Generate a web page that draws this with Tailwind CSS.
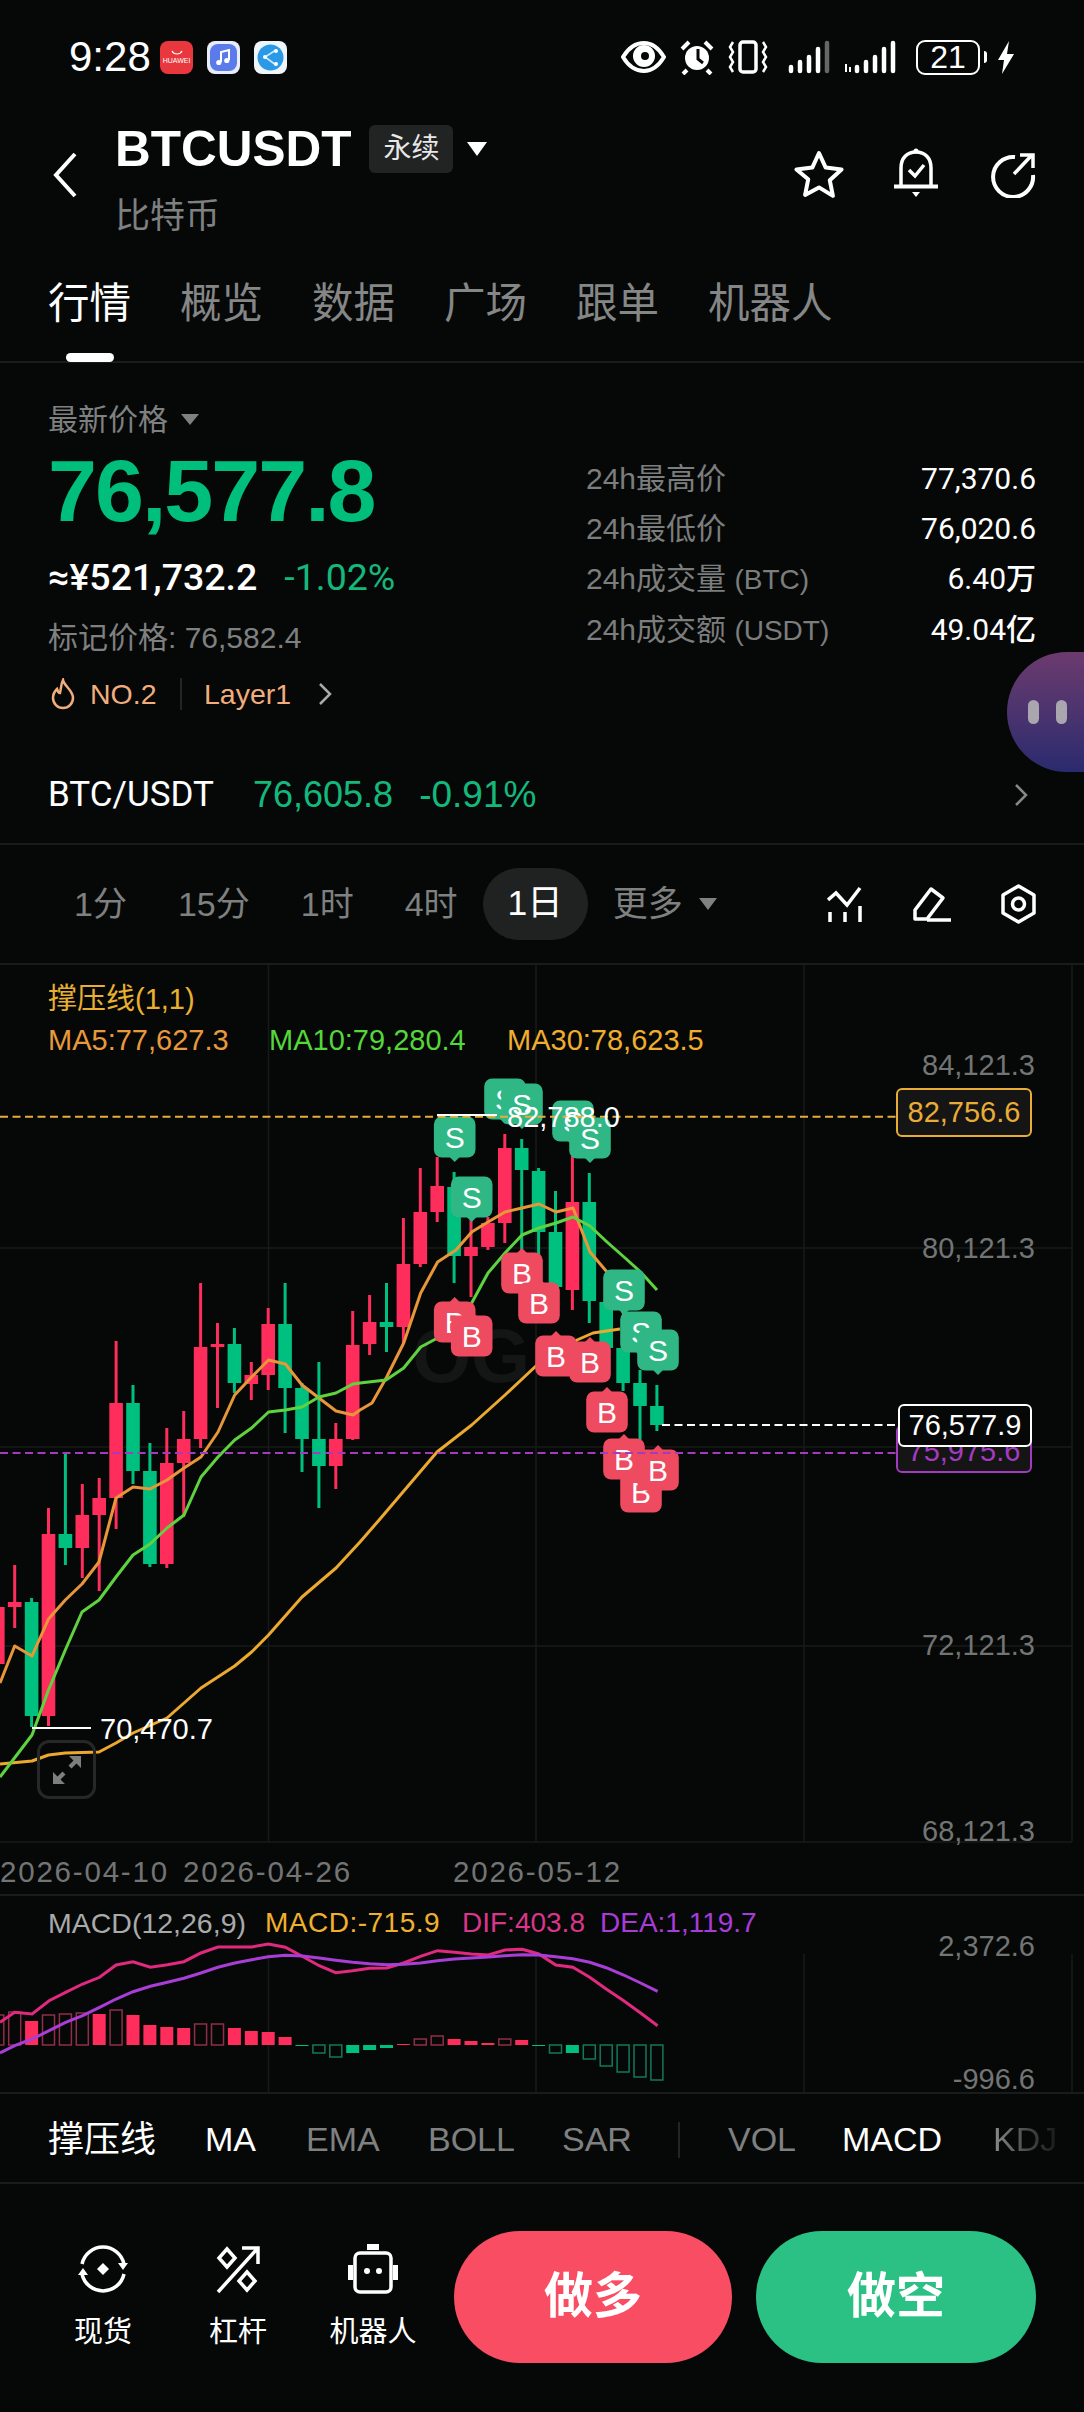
<!DOCTYPE html>
<html lang="zh">
<head>
  <meta charset="UTF-8" />
  <meta name="viewport" content="width=device-width, initial-scale=1.0" />
  <title>BTCUSDT</title>
  <script src="https://cdn.jsdelivr.net/npm/@tailwindcss/browser@4"></script>
</head>
<body class="bg-[#060808]">
<div class="w-[1084px] h-[2412px] overflow-hidden flex flex-col bg-[#060808] text-white font-['Liberation_Sans','Noto_Sans_CJK_SC',sans-serif]">

  <!-- status bar -->
  <div class="h-[114px] flex items-center pl-[69px] relative">
    <span class="text-[42px] w-[91px] leading-none">9:28</span>
    <div class="w-[33px] h-[33px] rounded-lg bg-[#e8383e] flex flex-col items-center justify-center">
      <svg width="14" height="6" viewBox="0 0 14 6"><path d="M2 1c2 4 8 4 10 0" fill="none" stroke="#fff" stroke-width="1.2"/></svg>
      <span class="text-[7px] leading-[9px] text-white">HUAWEI</span>
    </div>
    <div class="w-[33px] h-[33px] rounded-lg bg-[#e9edfb] flex items-center justify-center ml-[14px]">
      <svg width="27" height="27" viewBox="0 0 27 27"><rect width="27" height="27" rx="8" fill="#5b7bea"/><path d="M11 18V8l8-2v10" fill="none" stroke="#fff" stroke-width="2"/><circle cx="8.8" cy="18.5" r="2.6" fill="#fff"/><circle cx="16.8" cy="16.5" r="2.6" fill="#fff"/></svg>
    </div>
    <div class="w-[33px] h-[33px] rounded-lg bg-[#eef5fb] flex items-center justify-center ml-[14px]">
      <svg width="27" height="27" viewBox="0 0 27 27"><circle cx="13.5" cy="13.5" r="13" fill="#2b9ae6"/><path d="M19 6L8 13l11 8" fill="none" stroke="#cfeaff" stroke-width="1.6"/><circle cx="8" cy="13" r="2" fill="#fff"/><circle cx="19" cy="7" r="2" fill="#fff"/><circle cx="19" cy="20" r="2" fill="#fff"/></svg>
    </div>
    <div class="ml-auto flex items-center mr-[70px]">
      <svg width="45" height="32" viewBox="0 0 45 32"><path d="M2 16C8 6 15 2 23 2s14 4 20 14c-6 10-12 14-20 14S8 26 2 16z" fill="none" stroke="#fff" stroke-width="4"/><circle cx="23" cy="15" r="11" fill="#fff"/><circle cx="24" cy="15" r="4" fill="#060808"/></svg>
      <svg width="36" height="36" viewBox="0 0 36 36" class="ml-[13px]"><circle cx="18" cy="19" r="12" fill="#fff"/><path d="M19 10v10l5 4" fill="none" stroke="#060808" stroke-width="3"/><path d="M3 10l7-7M33 10l-7-7M8 31l-4 4M28 31l4 4" stroke="#fff" stroke-width="4"/></svg>
      <svg width="42" height="34" viewBox="0 0 42 34" class="ml-[12px]"><rect x="13" y="2" width="16" height="30" rx="3" fill="none" stroke="#fff" stroke-width="3.5"/><path d="M6 2l-3 5 3 5-3 5 3 5-3 5 3 5M36 2l3 5-3 5 3 5-3 5 3 5-3 5" fill="none" stroke="#fff" stroke-width="2.5"/></svg>
      <svg width="42" height="34" viewBox="0 0 42 34" class="ml-[19px]"><g stroke-width="4.5" stroke-linecap="round" stroke="#fff"><path d="M3 31v-4M12 31v-9M21 31v-14M30 31V9"/><path d="M39 31V3" stroke="#666"/></g></svg>
      <svg width="60" height="34" viewBox="0 0 60 34" class="ml-[14px]"><g stroke-width="4.5" stroke-linecap="round" stroke="#fff"><path d="M13 31v-4M22 31v-9M31 31v-14M40 31V9M49 31V3"/></g><path d="M2 32v-8M6 32v-5" stroke="#fff" stroke-width="2"/></svg>
      <div class="ml-[12px] w-[64px] h-[35px] rounded-[9px] border-[2.5px] border-white flex items-center justify-center text-[32px] leading-none">21</div>
      <div class="w-[3px] h-[12px] bg-white rounded-r ml-[4px]"></div>
      <svg width="16" height="33" viewBox="0 0 16 33" class="ml-[11px]"><path d="M11 0L0 19h6l-2 14 12-20H9z" fill="#fff"/></svg>
    </div>
  </div>

  <!-- header -->
  <div class="h-[136px] flex pt-[5px] relative">
    <svg width="26" height="46" viewBox="0 0 26 46" class="ml-[52px] mt-[33px]"><path d="M23 2L4 23l19 21" fill="none" stroke="#fff" stroke-width="4"/></svg>
    <div class="ml-[37px] flex flex-col">
      <div class="flex items-center h-[60px]">
        <span class="text-[49.5px] font-bold leading-none">BTCUSDT</span>
        <span class="ml-[18px] w-[84px] h-[48px] rounded-md bg-[#222323] flex items-center justify-center text-[28px] text-[#e8e8e8]">永续</span>
        <svg width="20" height="14" viewBox="0 0 20 14" class="ml-[14px]"><path d="M0 0h20L10 14z" fill="#fff"/></svg>
      </div>
      <div class="text-[35px] text-[#7f8080] leading-[44px] mt-[15px]">比特币</div>
    </div>
    <div class="ml-auto mr-[48px] flex items-start mt-[31px]">
      <svg width="50" height="48" viewBox="0 0 50 48"><path d="M25 3l6.7 14.6 15.8 1.9-11.7 10.8 3.1 15.6L25 37.4l-13.9 7.5 3.1-15.6L2.5 19.5l15.8-1.9z" fill="none" stroke="#fff" stroke-width="4" stroke-linejoin="round"/></svg>
      <svg width="48" height="50" viewBox="0 0 48 50" class="ml-[48px] -mt-[2px]"><path d="M9 38V20C9 10 15 4 24 4s15 6 15 16v18" fill="none" stroke="#fff" stroke-width="3.5"/><path d="M2 38.500h44" stroke="#fff" stroke-width="4"/><path d="M17 22l6 6 9-11" fill="none" stroke="#fff" stroke-width="3.500"/><path d="M20 44h8l-4 5z" fill="#fff"/><circle cx="24" cy="3" r="2.500" fill="#fff"/></svg>
      <svg width="46" height="46" viewBox="0 0 46 46" class="ml-[50px] mt-[2px]"><path d="M25 5A20 20 0 1 0 43 23" fill="none" stroke="#fff" stroke-width="4"/><path d="M24 22L42 3M30 3h13v13" fill="none" stroke="#fff" stroke-width="3.500"/></svg>
    </div>
  </div>

  <!-- tabs -->
  <div class="h-[113px] flex gap-[49px] pl-[48px] pt-[33px] text-[41.5px] leading-[41px] text-[#858686] border-b-2 border-[#1a1c1c]">
    <div class="relative text-white">行情<div class="absolute left-[18px] top-[70px] w-[48px] h-[9px] rounded-full bg-white"></div></div>
    <div>概览</div>
    <div>数据</div>
    <div>广场</div>
    <div>跟单</div>
    <div>机器人</div>
  </div>

  <!-- price -->
  <div class="h-[480px] relative flex flex-col">
    <div class="h-[351px] flex">
      <div class="pl-[48px] w-[586px] flex flex-col">
        <div class="mt-[36px] h-[40px] flex items-center text-[30px] text-[#7f8080]">最新价格
          <svg width="18" height="11" viewBox="0 0 18 11" class="ml-[13px]"><path d="M0 0h18L9 11z" fill="#7f8080"/></svg>
        </div>
        <div class="mt-[7px] text-[88px] leading-[90px] font-bold text-[#00bf7c] tracking-[-2px]">76,577.8</div>
        <div class="mt-[19px] h-[44px] flex items-center text-[37.5px] font-medium font-['Roboto','Noto_Sans_CJK_SC',sans-serif]">
          <span>≈¥521,732.2</span><span class="ml-[27px] text-[#14b87c] font-normal">-1.02%</span>
        </div>
        <div class="mt-[18px] h-[40px] flex items-center text-[30px] text-[#7f8080]">标记价格: 76,582.4</div>
        <div class="mt-[17px] h-[40px] flex items-center text-[28.5px] text-[#f2ad7c]">
          <svg width="24" height="32" viewBox="0 0 24 32" class="ml-[3px]"><path d="M12 2c1 6 10 10 10 18a10 10 0 0 1-20 0c0-4 2-7 4-9 1 3 2 4 3 4 1-4 1-9 3-13z" fill="none" stroke="#f2ad7c" stroke-width="2.500"/></svg>
          <span class="ml-[15px] w-[66px]">NO.2</span>
          <div class="w-[2px] h-[32px] bg-[#232525] ml-[24px]"></div>
          <span class="ml-[22px]">Layer1</span>
          <svg width="14" height="24" viewBox="0 0 14 24" class="ml-[27px]"><path d="M2 2l10 10L2 22" fill="none" stroke="#aaa" stroke-width="2.500"/></svg>
        </div>
      </div>
      <div class="w-[450px] pt-[91px] text-[30px] leading-[50px]">
        <div class="flex justify-between"><span class="text-[#7c7d7d]">24h最高价</span><span class="font-[450] font-['Roboto','Noto_Sans_CJK_SC',sans-serif]">77,370.6</span></div>
        <div class="flex justify-between"><span class="text-[#7c7d7d]">24h最低价</span><span class="font-[450] font-['Roboto','Noto_Sans_CJK_SC',sans-serif]">76,020.6</span></div>
        <div class="flex justify-between"><span class="text-[#7c7d7d]">24h成交量 <span class="text-[28px]">(BTC)</span></span><span class="font-[450] font-['Roboto','Noto_Sans_CJK_SC',sans-serif]">6.40万</span></div>
        <div class="flex justify-between"><span class="text-[#7c7d7d]">24h成交额 <span class="text-[28px]">(USDT)</span></span><span class="font-[450] font-['Roboto','Noto_Sans_CJK_SC',sans-serif]">49.04亿</span></div>
      </div>
    </div>
    <div class="mt-[51px] h-[60px] flex items-center pl-[48px] pr-[56px]">
      <span class="text-[35px] font-[450] font-['Roboto',sans-serif] w-[169px]">BTC/USDT</span>
      <span class="ml-[36px] text-[36px] text-[#14b87c]">76,605.8</span>
      <span class="ml-[26px] text-[37px] text-[#14b87c]">-0.91%</span>
      <svg width="14" height="24" viewBox="0 0 14 24" class="ml-auto"><path d="M2 2l10 10L2 22" fill="none" stroke="#888" stroke-width="2.500"/></svg>
    </div>
    <!-- floating assistant -->
    <div class="absolute left-[1007px] top-[289px] w-[77px] h-[120px] rounded-l-[60px] bg-gradient-to-b from-[#6c3a6e] to-[#2a2a6e] flex items-center gap-[17px] pl-[21px]">
      <div class="w-[11px] h-[24px] rounded-full bg-[#a9a6b0]"></div>
      <div class="w-[11px] h-[24px] rounded-full bg-[#a9a6b0]"></div>
    </div>
  </div>

  <!-- timeframes -->
  <div class="h-[122px] flex items-center pl-[74px] pr-[48px] border-y-2 border-[#1a1c1c] text-[34px] text-[#7f8080]">
    <div class="flex items-center gap-[51px]">
      <span>1分</span>
      <span>15分</span>
      <span>1时</span>
      <span>4时</span>
      <span class="-mx-[26px] h-[72px] px-[25px] rounded-full bg-[#202222] text-white text-[35.5px] flex items-center">1日</span>
      <span class="flex items-center text-[35px]">更多
        <svg width="18" height="12" viewBox="0 0 18 12" class="ml-[16px]"><path d="M0 0h18L9 12z" fill="#7f8080"/></svg>
      </span>
    </div>
    <div class="ml-auto flex items-center gap-[50px]">
      <svg width="36" height="38" viewBox="0 0 36 38"><path d="M1 15l8-7 11 12L33 3" fill="none" stroke="#fff" stroke-width="3.500"/><path d="M3 27v10M18 27v10M33 21v16" stroke="#fff" stroke-width="3.500"/></svg>
      <svg width="38" height="36" viewBox="0 0 38 36"><path d="M2 33v-9L18 3l12 9-16 21z" fill="none" stroke="#fff" stroke-width="3.500" stroke-linejoin="round"/><path d="M14 34h24" stroke="#fff" stroke-width="3.500"/></svg>
      <svg width="35" height="40" viewBox="0 0 35 40"><path d="M17.500 2L33 11v18l-15.500 9L2 29V11z" fill="none" stroke="#fff" stroke-width="3.500" stroke-linejoin="round"/><circle cx="17.500" cy="20" r="6" fill="none" stroke="#fff" stroke-width="3.500"/></svg>
    </div>
  </div>

  <!-- main chart -->
  <div class="h-[929px] relative shrink-0">
    <svg id="chart" class="absolute left-0 top-0" width="1084" height="929" viewBox="0 965 1084 929"></svg>

    <div class="absolute left-[48px] top-[17px] text-[29px] leading-[34px] text-[#e9b030]">撑压线(1,1)</div>
    <div class="absolute left-[48px] top-[58px] right-0 flex text-[29px] leading-[34px]">
      <span class="w-[221px] text-[#e8993c]">MA5:77,627.3</span>
      <span class="w-[238px] text-[#55d63a]">MA10:79,280.4</span>
      <span class="text-[#f0ad2e]">MA30:78,623.5</span>
    </div>

    <div class="absolute right-[49px] top-[83px] text-[29px] leading-[34px] text-[#737575]">84,121.3</div>
    <div class="absolute right-[49px] top-[266px] text-[29px] leading-[34px] text-[#737575]">80,121.3</div>
    <div class="absolute right-[49px] top-[663px] text-[29px] leading-[34px] text-[#737575]">72,121.3</div>
    <div class="absolute right-[49px] top-[849px] text-[29px] leading-[34px] text-[#737575]">68,121.3</div>

    <div class="absolute left-[896px] top-[123px] w-[136px] h-[49px] rounded-md border-2 border-[#e9ad36] bg-[#151515] flex items-center justify-center text-[29px] text-[#e9ad36]">82,756.6</div>
    <div class="absolute left-[896px] top-[460px] w-[136px] h-[48px] rounded-md border-2 border-[#a23bc0] bg-[#151515] flex items-end justify-center text-[29px] leading-[40px] text-[#a23bc0]">75,975.6</div>
    <div class="absolute left-[898px] top-[439px] w-[134px] h-[43px] rounded-md border-2 border-white bg-[#060808] flex items-center justify-center text-[29px] text-white">76,577.9</div>

    <div class="absolute left-[100px] top-[747px] text-[29px] leading-[34px] text-white">70,470.7</div>
    <div class="absolute left-[37px] top-[775px] w-[59px] h-[59px] rounded-[12px] border-[3px] border-[#262828] flex items-center justify-center">
      <svg width="30" height="30" viewBox="0 0 30 30"><path d="M29 1v12l-4.500-4.500-5 5-3-3 5-5L17 1zM1 29V17l4.500 4.500 5-5 3 3-5 5L13 29z" fill="#7d7f7f"/></svg>
    </div>

    <div class="absolute left-0 top-[890px] w-full text-[29.5px] leading-[34px] text-[#737575] tracking-[1.8px]">
      <span class="absolute left-0">2026-04-10</span>
      <span class="absolute left-[183px]">2026-04-26</span>
      <span class="absolute left-[453px]">2026-05-12</span>
    </div>
  </div>

  <!-- macd -->
  <div class="h-[198px] relative shrink-0 border-t-2 border-[#1a1c1c]">
    <svg id="macd" class="absolute left-0 top-[-2px]" width="1084" height="198" viewBox="0 1895 1084 198"></svg>
    <div class="absolute left-[48px] top-[10px] flex text-[28px] leading-[34px]">
      <span class="w-[217px] text-[#a9abab] text-[28.5px]">MACD(12,26,9)</span>
      <span class="w-[197px] text-[#f0b02e] tracking-[0.5px]">MACD:-715.9</span>
      <span class="w-[138px] text-[#d9368a]">DIF:403.8</span>
      <span class="text-[#a83cd8]">DEA:1,119.7</span>
    </div>
    <div class="absolute right-[49px] top-[33px] text-[29px] leading-[34px] text-[#737575]">2,372.6</div>
    <div class="absolute right-[49px] top-[166px] text-[29px] leading-[34px] text-[#737575]">-996.6</div>
  </div>

  <!-- indicators -->
  <div class="h-[92px] relative shrink-0 flex items-center pl-[48px] pt-[3px] border-y-2 border-[#1a1c1c] text-[34px] text-[#7f8080]">
    <span class="text-[36px] text-white w-[157px]">撑压线</span>
    <span class="text-white w-[101px]">MA</span>
    <span class="w-[122px]">EMA</span>
    <span class="w-[134px]">BOLL</span>
    <span class="w-[116px]">SAR</span>
    <div class="w-[2px] h-[36px] bg-[#232525]"></div>
    <span class="ml-[48px] w-[114px]">VOL</span>
    <span class="text-white w-[151px]">MACD</span>
    <span class="text-transparent bg-gradient-to-r from-[#8a8a8a] to-[#181a1a] bg-clip-text">KDJ</span>
  </div>

  <!-- bottom actions -->
  <div class="flex-1 relative flex items-start pt-[47px]">
    <div class="w-[454px] flex text-[29px] leading-[34px]">
      <div class="absolute left-[51px] top-[60px] w-[104px] flex flex-col items-center gap-[21px]">
        <svg width="50" height="50" viewBox="0 0 50 50"><path d="M4 20A21.500 21.500 0 0 1 46 20M46 30A21.500 21.500 0 0 1 4 30" fill="none" stroke="#fff" stroke-width="3.500"/><path d="M40 19h10l-5 7zM0 31h10l-5-7z" fill="#fff"/><path d="M25 19l6 6-6 6-6-6z" fill="#fff"/></svg>
        <span>现货</span>
      </div>
      <div class="absolute left-[186px] top-[60px] w-[104px] flex flex-col items-center gap-[21px]">
        <svg width="48" height="50" viewBox="0 0 48 50"><path d="M4 48L44 4M28 4h16v16" fill="none" stroke="#fff" stroke-width="3.500"/><path d="M13 5l8 9-8 9-8-9zM33 28l8 9-8 9-8-9z" fill="none" stroke="#fff" stroke-width="3.500"/></svg>
        <span>杠杆</span>
      </div>
      <div class="absolute left-[321px] top-[60px] w-[104px] flex flex-col items-center gap-[21px]">
        <svg width="50" height="50" viewBox="0 0 50 50"><rect x="19" y="0" width="12" height="6" fill="#fff"/><rect x="7" y="9" width="36" height="39" rx="5" fill="none" stroke="#fff" stroke-width="3.500"/><rect x="0" y="21" width="5" height="15" fill="#fff"/><rect x="45" y="21" width="5" height="15" fill="#fff"/><circle cx="19" cy="27" r="3" fill="#fff"/><circle cx="31" cy="27" r="3" fill="#fff"/></svg>
        <span>机器人</span>
      </div>
    </div>
    <button class="w-[278px] h-[132px] rounded-full bg-[#f94d63] text-[49px] font-bold text-white">做多</button>
    <button class="ml-[24px] w-[280px] h-[132px] rounded-full bg-[#2bc185] text-[49px] font-bold text-white">做空</button>
  </div>
</div>

<script>
  const RED = "#fe2d5c", GREEN = "#00c07f";
  const xOf = i => 14.7 + 16.9 * i;

  // i, up, high, bodyTop, bodyBottom, low
  const candles = [
    [-1,1,1590,1607,1664,1680],[0,1,1565,1602,1607,1628],[1,0,1598,1602,1716,1727],[2,1,1508,1534,1716,1726],
    [3,0,1454,1534,1548,1565],[4,1,1484,1515,1548,1578],[5,1,1478,1498,1515,1591],[6,1,1341,1403,1498,1529],
    [7,0,1385,1403,1471,1484],[8,0,1443,1471,1564,1567],[9,1,1428,1463,1564,1568],[10,1,1411,1439,1463,1517],
    [11,1,1283,1347,1439,1448],[12,1,1323,1344,1347,1408],[13,0,1328,1344,1383,1393],[14,1,1362,1375,1384,1400],
    [15,1,1308,1324,1375,1390],[16,0,1283,1324,1388,1433],[17,0,1383,1388,1439,1472],[18,0,1362,1439,1466,1508],
    [19,1,1423,1439,1466,1489],[20,1,1311,1345,1439,1440],[21,1,1295,1322,1344,1355],[22,0,1283,1322,1327,1352],
    [23,1,1218,1264,1327,1343],[24,1,1168,1212,1264,1267],[25,1,1157,1186,1212,1222],[26,0,1172,1187,1256,1283],
    [27,1,1215,1247,1256,1297],[28,1,1217,1223,1247,1250],[29,1,1134,1148,1223,1243],[30,0,1139,1148,1170,1250],
    [31,0,1168,1171,1232,1286],[32,0,1191,1232,1287,1290],[33,1,1156,1202,1290,1310],[34,0,1173,1202,1301,1323],
    [35,0,1290,1302,1348,1350],[36,0,1340,1348,1383,1391],[37,0,1370,1383,1406,1440],[38,0,1385,1406,1425,1431]
  ];

  const ma5 = "0,1683 14.7,1646 32,1656 48.5,1619 65.3,1600 82,1584 99,1562 116,1498 133,1487 150,1489 167,1480 184,1468 201,1457 218,1432 234.7,1395 251.6,1377 268.5,1360 285.4,1364 302,1385 319,1398 336,1411 353,1415 360,1410 372,1403 386.7,1377 403.7,1343 420.7,1293 437.6,1262 456,1250 471.7,1232 488,1222 505,1212 522,1208 539,1204 556,1212 573,1208 590,1252 607,1272 624,1315";
  const ma10 = "0,1777 32,1735 48.5,1690 65.3,1650 82,1612 99,1600 116,1577 133,1555 150,1544 167,1528 184,1515 201,1477 218,1457 234.7,1440 251.6,1428 268.5,1412 285.4,1410 302,1407 319,1397 336,1393 353,1384 360,1383 386,1380 403.7,1368 420.7,1347 437.6,1338 471.7,1303 488,1273 505,1253 522,1235 539,1228 556,1223 573,1217 590,1226 607,1242 624,1257 640.7,1272 657,1290";
  const ma30 = "0,1764 32,1761 48.5,1755 65.3,1753 99,1752 116,1743 133,1733 167,1718 201,1688 234.7,1666 251.6,1652 268.5,1635 302,1597 336,1568 360,1542 380,1519 437,1452 471.7,1425 505,1395 537,1365 577,1340 593,1333 620,1329";

  // kind, centre x, centre y; the order is the paint order, later ones cover earlier ones
  const markers = [
    ["S",454.7,1137],["S",471.7,1197],["S",505,1099],["S",522,1104],["S",573,1121],["S",590,1138],
    ["S",624,1290],["S",641,1332],["S",658,1350],
    ["B",454.7,1322],["B",471.7,1336],["B",522,1273],["B",539,1303],["B",556,1356],["B",590,1362],
    ["B",607,1412],["B",641,1492],["B",624,1459],["B",658,1470]
  ];

  let s = "";
  [268.5,536,804,1072].forEach(x => s += `<line x1="${x}" x2="${x}" y1="965" y2="1842" stroke="#181a1a" stroke-width="1.500"/>`);
  [1248,1447,1646,1842].forEach(y => s += `<line x1="0" x2="1072" y1="${y}" y2="${y}" stroke="#181a1a" stroke-width="1.500"/>`);
  s += `<text x="412" y="1382" font-family="Liberation Sans" font-weight="700" font-size="76" fill="#141616">OG</text>`;
  candles.forEach(c => {
    const col = c[1] ? RED : GREEN, x = xOf(c[0]);
    s += `<line x1="${x}" x2="${x}" y1="${c[2]}" y2="${c[5]}" stroke="${col}" stroke-width="3"/>`;
    s += `<rect x="${x - 6.8}" y="${c[3]}" width="13.6" height="${c[4] - c[3]}" fill="${col}"/>`;
  });
  [[ma30,"#eda92f"],[ma5,"#e8963a"],[ma10,"#5fd33f"]].forEach(l => {
    s += `<polyline points="${l[0]}" fill="none" stroke="${l[1]}" stroke-width="3" stroke-linejoin="round"/>`;
  });
  markers.forEach(m => {
    const [k,x,y] = m, col = k === "S" ? "#2fb785" : "#ee4a60";
    s += `<rect x="${x - 20.8}" y="${y - 20.5}" width="41.600" height="41" rx="8" fill="${col}"/>`;
    s += k === "S"
      ? `<path d="M${x - 5} ${y + 20}h10l-5 5z" fill="${col}"/>`
      : `<path d="M${x - 5} ${y - 20}h10l-5 -5z" fill="${col}"/>`;
    s += `<text x="${x}" y="${y + 10.5}" text-anchor="middle" font-family="Liberation Sans" font-size="30" fill="#fff">${k}</text>`;
  });
  s += `<line x1="0" x2="896" y1="1116.700" y2="1116.700" stroke="#e9ad36" stroke-width="2" stroke-dasharray="8 4.500"/>`;
  s += `<line x1="0" x2="896" y1="1453" y2="1453" stroke="#a23bc0" stroke-width="2" stroke-dasharray="8 4.500"/>`;
  s += `<line x1="662" x2="898" y1="1425" y2="1425" stroke="#fff" stroke-width="2" stroke-dasharray="8 4.500"/>`;
  s += `<line x1="437" x2="497" y1="1115" y2="1115" stroke="#fff" stroke-width="2"/>`;
  s += `<text x="507" y="1127" font-family="Liberation Sans" font-size="29" fill="#fff">82,788.0</text>`;
  s += `<line x1="32" x2="91" y1="1728" y2="1728" stroke="#fff" stroke-width="2"/>`;
  document.getElementById("chart").innerHTML = s;

  // macd bars: i, solid, y end of the bar
  const bars = [
    [-1,0,2016],[0,0,2013],[1,1,2022],[2,0,2016],[3,0,2015],[4,0,2014],[5,1,2015],[6,0,2011],[7,1,2016],[8,1,2026],
    [9,1,2028],[10,1,2029],[11,0,2025],[12,0,2025],[13,1,2029],[14,1,2032],[15,1,2033],[16,1,2038],[17,1,2047],
    [18,0,2054],[19,0,2058],[20,1,2054],[21,1,2051],[22,1,2049],[23,1,2045],[24,0,2040],[25,0,2037],[26,1,2040],
    [27,1,2042],[28,1,2044],[29,0,2040],[30,1,2041],[31,1,2047],[32,0,2054],[33,1,2054],[34,0,2060],[35,0,2067],
    [36,0,2073],[37,0,2078],[38,0,2081]
  ];
  const toMacd = pts => pts.map(p => (p[0] / 2.24).toFixed(1) + "," + (1860 + p[1] / 3).toFixed(1)).join(" ");
  const dif = [[0,490],[33,460],[72,465],[110,425],[147,400],[185,375],[223,355],[260,318],[298,308],[337,325],[375,317],[412,308],[450,282],[488,264],[526,264],[564,264],[601,255],[639,265],[677,292],[715,320],[752,341],[790,335],[828,328],[866,327],[904,312],[942,292],[980,275],[1018,280],[1056,285],[1094,288],[1131,273],[1170,271],[1207,285],[1245,318],[1283,325],[1321,355],[1358,390],[1397,425],[1435,462],[1473,500]];
  const dea = [[0,582],[33,560],[72,540],[110,515],[147,490],[185,470],[223,445],[260,420],[298,398],[337,382],[375,370],[412,358],[450,342],[488,325],[526,312],[564,302],[601,293],[639,289],[677,291],[715,297],[752,304],[790,310],[828,314],[866,317],[904,316],[942,312],[980,305],[1018,300],[1056,297],[1094,294],[1131,290],[1170,287],[1207,288],[1245,293],[1283,299],[1321,310],[1358,326],[1397,348],[1435,372],[1473,397]];

  let m = "";
  [268.5,536,804,1072].forEach(x => m += `<line x1="${x}" x2="${x}" y1="1955" y2="2093" stroke="#181a1a" stroke-width="1.500"/>`);
  bars.forEach(b => {
    const x = xOf(b[0]), base = 2046, up = b[2] < base;
    const top = Math.min(b[2], base), h = Math.max(Math.abs(b[2] - base), 1);
    if (b[1]) m += `<rect x="${x - 6.5}" y="${top}" width="13" height="${h}" fill="${up ? RED : GREEN}"/>`;
    else m += `<rect x="${x - 6}" y="${top}" width="12" height="${h}" fill="none" stroke="${up ? "#8f2e46" : "#14775a"}" stroke-width="1.500"/>`;
  });
  m += `<polyline points="${toMacd(dif)}" fill="none" stroke="#e0297f" stroke-width="3"/>`;
  m += `<polyline points="${toMacd(dea)}" fill="none" stroke="#a83ed6" stroke-width="3"/>`;
  document.getElementById("macd").innerHTML = m;
</script>
</body>
</html>
